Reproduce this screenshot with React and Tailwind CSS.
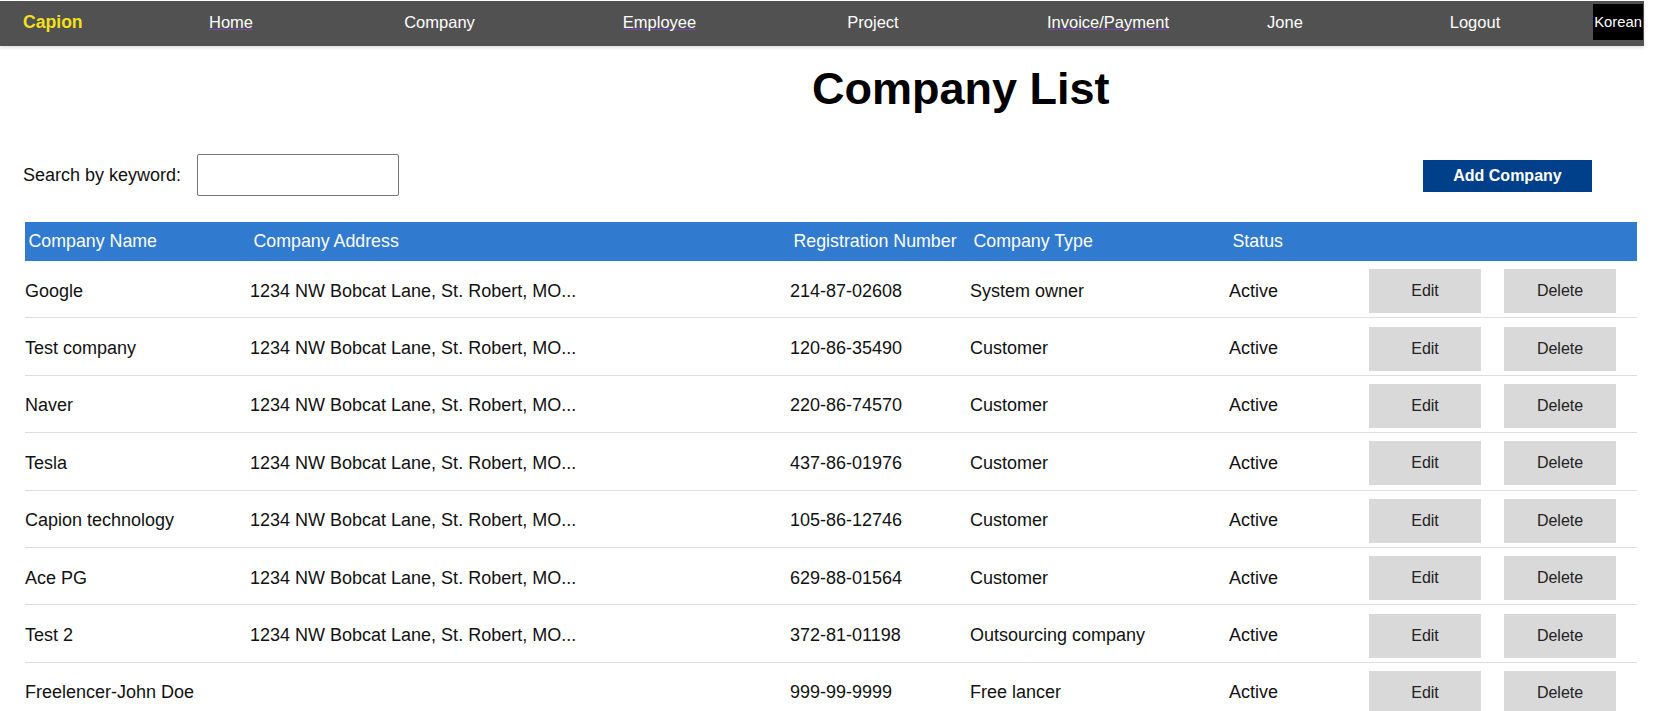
import React from "react";

const navLinks = [
  { label: "Home", w: "w-[180px]", visited: true },
  { label: "Company", w: "w-[237px]", visited: false },
  { label: "Employee", w: "w-[203px]", visited: true },
  { label: "Project", w: "w-[224px]", visited: false },
  { label: "Invoice/Payment", w: "w-[246px]", visited: true },
  { label: "Jone", w: "w-[108px]", visited: false },
];

const ADDR = "1234 NW Bobcat Lane, St. Robert, MO...";

const companies = [
  { name: "Google", address: ADDR, reg: "214-87-02608", type: "System owner" },
  { name: "Test company", address: ADDR, reg: "120-86-35490", type: "Customer" },
  { name: "Naver", address: ADDR, reg: "220-86-74570", type: "Customer" },
  { name: "Tesla", address: ADDR, reg: "437-86-01976", type: "Customer" },
  { name: "Capion technology", address: ADDR, reg: "105-86-12746", type: "Customer" },
  { name: "Ace PG", address: ADDR, reg: "629-88-01564", type: "Customer" },
  { name: "Test 2", address: ADDR, reg: "372-81-01198", type: "Outsourcing company" },
  { name: "Freelencer-John Doe", address: "", reg: "999-99-9999", type: "Free lancer" },
];

function NavBar() {
  return (
    <nav className="mt-px flex h-[45px] w-[1644px] items-center bg-[#515151] pb-[3px] shadow-[0_2px_3px_rgba(0,0,0,0.12)]">
      <div className="w-[141px] pl-[23px] text-[17.6px] font-bold text-[#f3e01c]">Capion</div>
      {navLinks.map(link => (
        <div key={link.label} className={`${link.w} text-center text-[16.5px] text-white`}>
          <a className={link.visited ? "underline decoration-[#7a45b0] decoration-1 underline-offset-[1px]" : "no-underline"}>
            {link.label}
          </a>
        </div>
      ))}
      <div className="ml-[36px] w-[200px] text-center text-[16.5px] text-white">Logout</div>
      <button className="ml-[18px] mt-[3px] flex h-[36px] w-[50px] items-center justify-center self-start bg-black text-[14.8px] text-white">
        Korean
      </button>
    </nav>
  );
}

function CompanyRow({ c }) {
  return (
    <div className="flex h-[57.4px] items-center border-b border-[#dddddd] pt-[4px] text-[18px] text-[#111]">
      <div className="w-[225px]">{c.name}</div>
      <div className="w-[540px]">{c.address}</div>
      <div className="w-[180px]">{c.reg}</div>
      <div className="w-[259px]">{c.type}</div>
      <div className="w-[140px]">Active</div>
      <div className="w-[135px]">
        <button className="h-[44px] w-[112px] bg-[#d9d9d9] text-[16px] text-[#222]">Edit</button>
      </div>
      <div className="w-[133px]">
        <button className="h-[44px] w-[112px] bg-[#d9d9d9] text-[16px] text-[#222]">Delete</button>
      </div>
    </div>
  );
}

export default function App() {
  return (
    <div className="w-[1644px] bg-white font-['Liberation_Sans',Arial,sans-serif]">
      <NavBar />

      <h1 className="mt-[17px] pl-[812px] text-[45px] font-bold leading-[52px] text-black">Company List</h1>

      <div className="mt-[39px] flex h-[42px] items-start pl-[23px] pr-[52px]">
        <label className="mt-[8px] text-[18px] text-[#111]">Search by keyword:</label>
        <input
          type="text"
          className="ml-[16px] h-[42px] w-[202px] rounded-[2px] border border-[#767676] bg-white px-2 outline-none"
        />
        <button className="ml-auto mt-[6px] h-[32px] w-[169px] bg-[#003f8a] text-[16px] font-bold text-white">
          Add Company
        </button>
      </div>

      <div className="ml-[25px] mt-[26px] w-[1612px]">
        <div className="flex h-[39px] items-center bg-[#307ad0] text-[17.8px] text-white">
          <div className="w-[225px] pl-[3.5px]">Company Name</div>
          <div className="w-[540px] pl-[3.5px]">Company Address</div>
          <div className="w-[180px] pl-[3.5px]">Registration Number</div>
          <div className="w-[259px] pl-[3.5px]">Company Type</div>
          <div className="w-[140px] pl-[3.5px]">Status</div>
          <div className="w-[268px]" />
        </div>
        {companies.map(c => (
          <CompanyRow key={c.name} c={c} />
        ))}
      </div>
    </div>
  );
}
